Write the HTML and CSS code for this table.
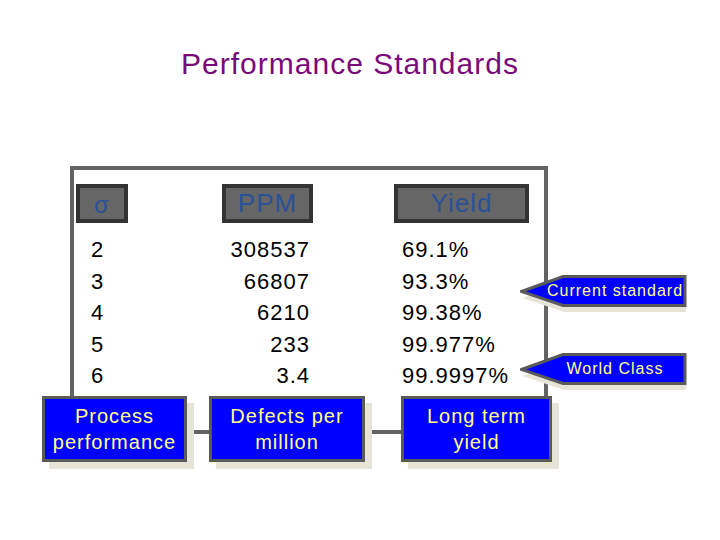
FILE: index.html
```html
<!DOCTYPE html>
<html lang="en">
<head>
<meta charset="utf-8">
<title>Performance Standards</title>
<link rel="stylesheet" href="styles.css">
</head>
<body>
<h1 class="title">Performance Standards</h1>
<div class="stage">
  <div class="frame">
    <div class="heads">
      <div class="head head-sigma">σ</div>
      <div class="head head-ppm">PPM</div>
      <div class="head head-yield">Yield</div>
    </div>
    <div class="data">
      <div class="c1">2</div><div class="c2">308537</div><div class="c3">69.1%</div>
      <div class="c1">3</div><div class="c2">66807</div><div class="c3">93.3%</div>
      <div class="c1">4</div><div class="c2">6210</div><div class="c3">99.38%</div>
      <div class="c1">5</div><div class="c2">233</div><div class="c3">99.977%</div>
      <div class="c1">6</div><div class="c2">3.4</div><div class="c3">99.9997%</div>
    </div>
    <div class="labels">
      <div class="label label-process">Process<br>performance</div>
      <div class="label label-defects">Defects per<br>million</div>
      <div class="label label-yield">Long term<br>yield</div>
    </div>
  </div>
  <div class="arrow arrow-current">
    <svg class="arrow-shape" viewBox="0 0 172 40" width="172" height="40">
      <polygon class="arrow-shadow" points="2.5,23 44,7.5 166,7.5 166,37 44,37"/>
      <polygon class="arrow-body" points="1.5,16.5 43,1.5 165,1.5 165,30.5 43,30.5"/>
    </svg>
    <span class="arrow-text">Current standard</span>
  </div>
  <div class="arrow arrow-world">
    <svg class="arrow-shape" viewBox="0 0 172 40" width="172" height="40">
      <polygon class="arrow-shadow" points="2.5,23 44,7.5 166,7.5 166,37 44,37"/>
      <polygon class="arrow-body" points="1.5,16.5 43,1.5 165,1.5 165,30.5 43,30.5"/>
    </svg>
    <span class="arrow-text">World Class</span>
  </div>
</div>
</body>
</html>
```
FILE: styles.css
```css
* { box-sizing: border-box; }

body {
  margin: 0;
  width: 720px;
  height: 540px;
  background: #ffffff;
  font-family: "Liberation Sans", Arial, sans-serif;
  color: #000000;
  overflow: hidden;
}

.title {
  margin: 0;
  padding: 46px 20px 0 0;
  font-size: 30px;
  line-height: 36px;
  font-weight: normal;
  letter-spacing: 1px;
  text-align: center;
  color: #7a0a78;
}

.stage {
  position: relative;
  margin-top: 84px;
}

.frame {
  margin-left: 70px;
  width: 478px;
  height: 268px;
  border: 4px solid #636363;
  padding: 14px 0 0 2px;
}

.heads {
  display: grid;
  grid-template-columns: 52px 94px 91px 81px 135px;
}

.head {
  height: 39px;
  border: 4px solid #333333;
  background: #666666;
  color: #2b5196;
  font-size: 26px;
  letter-spacing: 1px;
  display: flex;
  align-items: center;
  justify-content: center;
}

.head-sigma { grid-column: 1; font-size: 24px; padding-top: 2px; }
.head-ppm { grid-column: 3; }
.head-yield { grid-column: 5; }

.data {
  margin-top: 11px;
  display: grid;
  grid-template-columns: 146px 91px 81px 135px;
  grid-auto-rows: 31.5px;
  font-size: 22px;
  line-height: 31.5px;
  letter-spacing: 1px;
}

.c1 { grid-column: 1; padding-left: 15px; }
.c2 { grid-column: 2; text-align: right; padding-right: 3px; }
.c3 { grid-column: 4; padding-left: 8px; }

.labels {
  display: flex;
  margin-top: 4.5px;
  margin-left: -34px;
}

.label {
  flex: 0 0 auto;
  height: 66px;
  border: 3px solid #5a5a5a;
  background: #0000ff;
  color: #ffff88;
  font-size: 20px;
  line-height: 26px;
  letter-spacing: 1px;
  text-align: center;
  padding-top: 4px;
  box-shadow: 7px 7px 0 #e6e4d8;
}

.label-process { width: 145px; }
.label-defects { width: 156px; margin-left: 22px; }
.label-yield { width: 151px; margin-left: 36px; }

.arrow {
  position: absolute;
  left: 520px;
  width: 172px;
  height: 40px;
}

.arrow-current { top: 109px; }
.arrow-world { top: 187px; }

.arrow-shape {
  position: absolute;
  left: 0;
  top: 0;
}

.arrow-shadow { fill: #e6e4d8; }
.arrow-body { fill: #0000ff; stroke: #5a5a5a; stroke-width: 3; stroke-linejoin: miter; }

.arrow-text {
  position: relative;
  display: block;
  width: 166px;
  height: 32px;
  line-height: 32px;
  padding-left: 24px;
  text-align: center;
  font-size: 16px;
  letter-spacing: 1px;
  color: #ffff88;
  white-space: nowrap;
}
```
